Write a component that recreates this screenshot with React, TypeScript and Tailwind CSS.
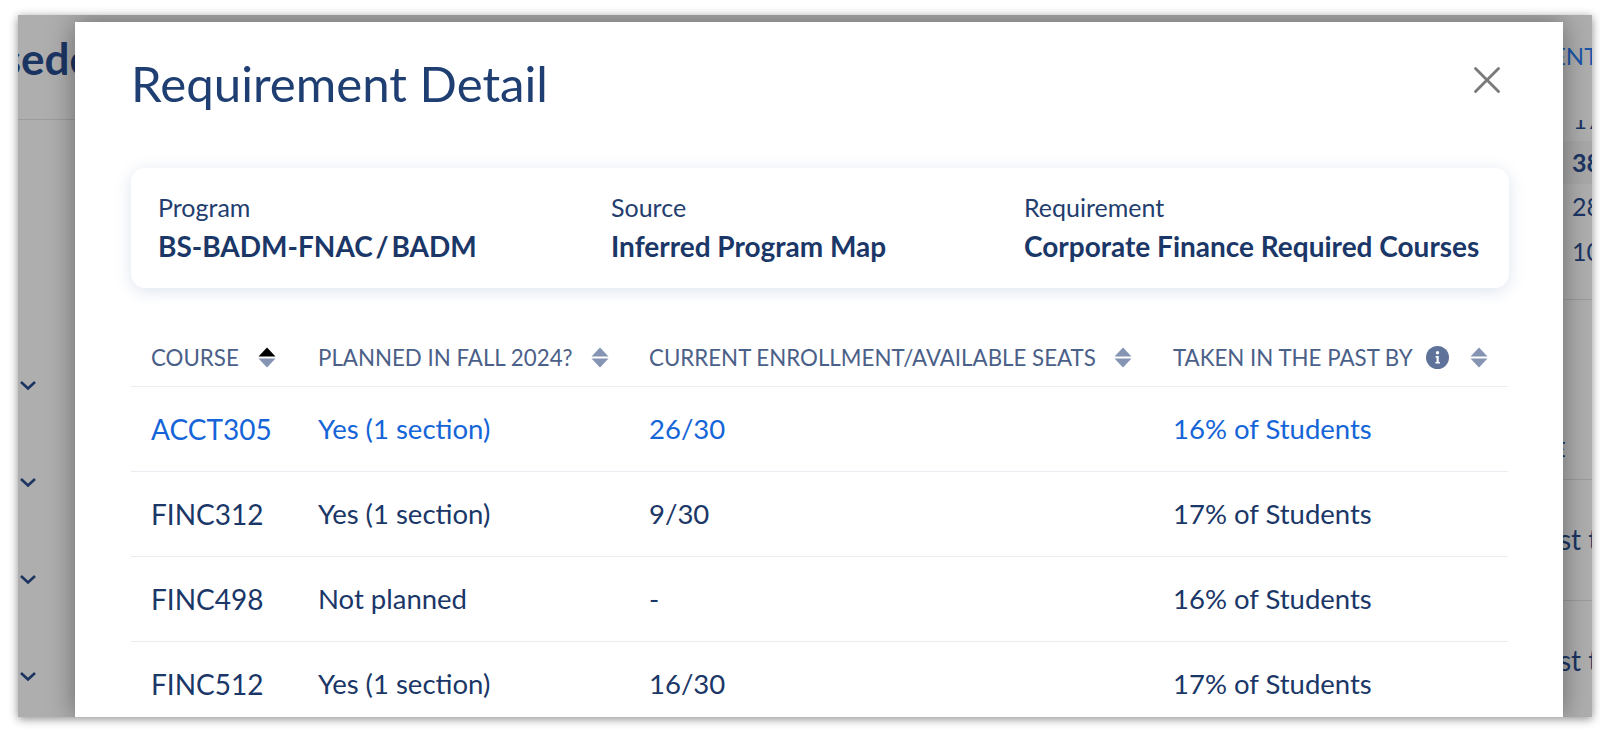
import { X } from "lucide-react";

type Row = {
  course: string;
  planned: string;
  seats: string;
  taken: string;
  active?: boolean;
};

const rows: Row[] = [
  { course: "ACCT305", planned: "Yes (1 section)", seats: "26/30", taken: "16% of Students", active: true },
  { course: "FINC312", planned: "Yes (1 section)", seats: "9/30", taken: "17% of Students" },
  { course: "FINC498", planned: "Not planned", seats: "-", taken: "16% of Students" },
  { course: "FINC512", planned: "Yes (1 section)", seats: "16/30", taken: "17% of Students" },
];

const SortIcon = ({ up }: { up?: boolean }) => (
  <svg width="18" height="21" viewBox="0 0 18 21" className="shrink-0">
    <path d="M9 0.5 L17.5 9.5 H0.5 Z" fill={up ? "#000000" : "#8494b2"} />
    <path d="M9 20.5 L17.5 11.5 H0.5 Z" fill="#8494b2" />
  </svg>
);

const InfoIcon = () => (
  <svg width="23" height="23" viewBox="0 0 23 23" className="shrink-0">
    <circle cx="11.5" cy="11.5" r="11.5" fill="#5f7299" />
    <circle cx="11.5" cy="6.8" r="1.7" fill="#ffffff" />
    <path d="M9.6 10h3.1v6h1.2v1.6H9.4V16h1.2v-4.4h-1z" fill="#ffffff" />
  </svg>
);

const Chevron = () => (
  <svg width="18" height="11" viewBox="0 0 18 11" fill="none">
    <path d="M2 2l7 6.5L16 2" stroke="#1c3461" strokeWidth="2.6" />
  </svg>
);

const Info = ({ label, value, className }: { label: string; value: string; className: string }) => (
  <div className={className}>
    <div className="text-[25px] leading-[28px] text-[#233e6e]">{label}</div>
    <div className="mt-[11px] text-[28px] leading-[29px] font-bold text-[#1a3768]">{value}</div>
  </div>
);

export default function App() {
  return (
    <div
      className="h-[730px] w-[1600px] overflow-hidden bg-white pt-[15px] pr-[8px] pl-[18px]"
      style={{ fontFamily: "Lato, 'Noto Sans', sans-serif" }}
    >
      <div className="flex h-[702px] overflow-hidden bg-[#aeaeae] shadow-[0_2px_9px_rgba(0,0,0,0.45)]">
        {/* page behind the dialog */}
        <div className="flex w-[57px] shrink-0 flex-col overflow-hidden">
          <div className="flex h-[105px] items-center justify-end border-b border-[#9c9c9c] pb-[18px] whitespace-nowrap">
            <span className="-mr-[18px] text-[44px] font-bold text-[#1b3563]">Supersede</span>
          </div>
          <div className="flex flex-col gap-[86px] pt-[260px] pl-[1px]">
            <Chevron />
            <Chevron />
            <Chevron />
            <Chevron />
          </div>
        </div>

        <div className="relative z-10 mt-[7px] flex-1 overflow-hidden bg-white px-[56px] shadow-[0_0_26px_rgba(0,0,0,0.4)]">
          <div className="flex h-[146px] items-start justify-between">
            <h1 className="mt-[29px] text-[49.2px] leading-[64px] font-normal text-[#1f3f73]">Requirement Detail</h1>
            <X className="mt-[35px] -mr-[3px] text-[#7a7a7a]" size={46} strokeWidth={1.5} />
          </div>

          <div className="flex h-[120px] w-[1378px] items-start rounded-[14px] bg-white pt-[25px] pl-[27px] shadow-[0_3px_16px_rgba(80,115,175,0.2)]">
            <Info label="Program" value="BS-BADM-FNAC / BADM" className="w-[453px] [word-spacing:-4px]" />
            <Info label="Source" value="Inferred Program Map" className="w-[413px]" />
            <Info label="Requirement" value="Corporate Finance Required Courses" className="whitespace-nowrap" />
          </div>

          <table className="mt-[13px] w-[1377px] table-fixed border-collapse text-left">
            <colgroup>
              <col className="w-[166px]" />
              <col className="w-[331px]" />
              <col className="w-[524px]" />
              <col className="w-[356px]" />
            </colgroup>
            <thead>
              <tr className="h-[85px] border-b border-[#e9ecf1] text-[22.3px] font-normal text-[#4b6088]">
                <th className="pt-[28px] pl-[20px] font-normal">
                  <div className="flex items-center gap-[19px]">COURSE <SortIcon up /></div>
                </th>
                <th className="pt-[28px] pl-[21px] font-normal">
                  <div className="flex items-center gap-[18px]">PLANNED IN FALL 2024? <SortIcon /></div>
                </th>
                <th className="pt-[28px] pl-[21px] font-normal">
                  <div className="flex items-center gap-[18px]">CURRENT ENROLLMENT/AVAILABLE SEATS <SortIcon /></div>
                </th>
                <th className="pt-[28px] pl-[21px] font-normal">
                  <div className="flex items-center">
                    TAKEN IN THE PAST BY
                    <span className="mr-[21px] ml-[13px]"><InfoIcon /></span>
                    <SortIcon />
                  </div>
                </th>
              </tr>
            </thead>
            <tbody>
              {rows.map((row) => (
                <tr
                  key={row.course}
                  className={`h-[85px] border-b border-[#e9ecf1] text-[27.5px] ${row.active ? "text-[#1565d8]" : "text-[#1a3768]"}`}
                >
                  <td className="pl-[20px] text-[28px]">{row.course}</td>
                  <td className="pl-[21px]">{row.planned}</td>
                  <td className="pl-[21px]">{row.seats}</td>
                  <td className="pl-[21px]">{row.taken}</td>
                </tr>
              ))}
            </tbody>
          </table>
        </div>

        <div className="flex w-[29px] shrink-0 flex-col overflow-hidden whitespace-nowrap text-[#1b3563]">
          <div className="h-[105px] pt-[23px] text-[24px] text-[#1c56a8]">
            <span className="-ml-[11px] block">ENT</span>
          </div>
          <div className="h-[20px] overflow-hidden text-[24px] leading-[20px]">
            <span className="block -translate-y-[10px] pl-[10px]">17</span>
          </div>
          <div className="mt-[1px] h-[43px] bg-[#a8a8a8] pl-[9px] text-[25px] leading-[43px] font-bold">38</div>
          <div className="h-[45px] pl-[9px] text-[25px] leading-[45px]">28</div>
          <div className="h-[45px] pl-[9px] text-[25px] leading-[45px]">10</div>
          <div className="mt-[25px] h-[180px] border-t border-[#9c9c9c] pt-[134px] text-[22px] leading-[30px]">
            <span className="block -ml-[10px]">E</span>
          </div>
          <div className="h-[121px] border-t border-[#9c9c9c] pt-[42px] text-[28px] leading-[34px]">
            <span className="block -ml-[4px]">st t</span>
          </div>
          <div className="border-t border-[#9c9c9c] pt-[42px] text-[28px] leading-[34px]">
            <span className="block -ml-[4px]">st t</span>
          </div>
        </div>
      </div>
    </div>
  );
}
